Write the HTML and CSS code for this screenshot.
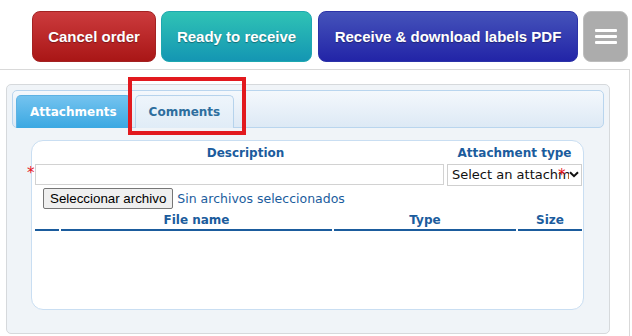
FILE: index.html
```html
<!DOCTYPE html>
<html>
<head>
<meta charset="utf-8">
<link rel="stylesheet" href="styles.css">
</head>
<body>
<div class="toolbar">
  <button class="btn btn-red">Cancel order</button>
  <button class="btn btn-teal">Ready to receive</button>
  <button class="btn btn-blue">Receive &amp; download labels PDF</button>
  <button class="btn btn-gray" aria-label="Menu">
    <span class="bars"><span></span><span></span><span></span></span>
  </button>
</div>
<div class="frame">
  <div class="panel">
    <div class="tabnav">
      <div class="tab active">Attachments</div>
      <div class="tab">Comments</div>
    </div>
    <div class="box">
      <div class="grid-row heads">
        <div class="h-desc">Description</div>
        <div class="h-type">Attachment type</div>
      </div>
      <div class="grid-row inputs">
        <div class="field"><span class="req req-left">*</span><input class="text-in" type="text"></div>
        <div class="field">
          <div class="fake-select"><span class="sel-text">Select an attachment type</span>
            <svg class="chev" width="10" height="7" viewBox="0 0 10 7"><path d="M1 1.2 L5 5.2 L9 1.2" fill="none" stroke="#111" stroke-width="2"/></svg>
          </div>
          <span class="req req-sel">*</span>
        </div>
      </div>
      <div class="file-row">
        <button class="file-btn">Seleccionar archivo</button>
        <span class="file-none">Sin archivos seleccionados</span>
      </div>
      <table class="files">
        <thead>
          <tr><th class="c1"></th><th class="c2">File name</th><th class="c3">Type</th><th class="c4">Size</th></tr>
        </thead>
      </table>
    </div>
  </div>
  <div class="annot"></div>
</div>
</body>
</html>
```

FILE: styles.css
```css
html, body {
  margin: 0;
  padding: 0;
  background: #fff;
  width: 632px;
  height: 336px;
  overflow: hidden;
}
.toolbar {
  display: flex;
  justify-content: flex-end;
  align-items: flex-start;
  gap: 5px;
  padding: 11px 4px 0 0;
  height: 69px;
  box-sizing: border-box;
}
.btn {
  height: 51px;
  border-radius: 8px;
  border: 1px solid transparent;
  color: #fff;
  font-family: "Liberation Sans", Arial, sans-serif;
  font-weight: bold;
  font-size: 15px;
  white-space: nowrap;
  text-shadow: 0 1px 1px rgba(0,0,0,0.35);
  padding: 0;
  cursor: pointer;
  flex: none;
}
.btn-red {
  width: 124px;
  background: linear-gradient(#cc3b3d, #a91616);
  border-color: #a32222;
}
.btn-teal {
  width: 151px;
  background: linear-gradient(#2fc3b5, #1496b3);
  border-color: #1ea8b0;
}
.btn-blue {
  width: 260px;
  margin-left: 1px;
  background: linear-gradient(#4553ba, #2224a7);
  border-color: #2c33a8;
}
.btn-gray {
  width: 45px;
  background: #acacac;
  border-color: #bdbdbd;
  display: flex;
  align-items: center;
  justify-content: center;
}
.bars {
  display: flex;
  flex-direction: column;
  gap: 3.5px;
  width: 22px;
}
.bars span {
  display: block;
  height: 2.5px;
  background: #fff;
  border-radius: 1px;
}
.frame {
  position: relative;
  width: 630px;
  height: 267px;
  box-sizing: border-box;
  border-top: 1px solid #d9d9d9;
  border-right: 1px solid #d9d9d9;
  padding: 14px 0 0 6px;
}
.panel {
  width: 604px;
  height: 250px;
  box-sizing: border-box;
  border: 1px solid #d6d9dc;
  border-radius: 5px;
  background: #f0f4f8;
  padding: 5px;
}
.tabnav {
  height: 38px;
  box-sizing: border-box;
  border: 1px solid #b9d5ee;
  border-radius: 5px;
  background: linear-gradient(#f4f8fc, #dde9f5);
  padding: 4px 0 0 3px;
  display: flex;
  gap: 4px;
  align-items: flex-end;
}
.tab {
  height: 33px;
  margin-bottom: -1px;
  box-sizing: border-box;
  padding: 0 13px 1px;
  border: 1px solid #b6d3ec;
  border-bottom: none;
  border-radius: 5px 5px 0 0;
  background: linear-gradient(#eef5fb, #e0ecf7);
  color: #2e6e9e;
  font-family: "DejaVu Sans", Verdana, sans-serif;
  font-weight: bold;
  font-size: 12px;
  display: flex;
  align-items: center;
}
.tab.active {
  background: linear-gradient(#74c3ef, #3ba8e2);
  border-color: #5db2e3;
  color: #fff;
}
.box {
  margin: 12px 0 0 19px;
  width: 553px;
  height: 170px;
  box-sizing: border-box;
  background: #fff;
  border: 1px solid #c9def2;
  border-radius: 12px;
  padding: 2px 2px 0 2px;
  font-family: "DejaVu Sans", Verdana, sans-serif;
}
.grid-row {
  display: grid;
  grid-template-columns: 409px 135px;
  column-gap: 3px;
  padding-left: 1px;
}
.heads {
  color: #1b5c9d;
  font-weight: bold;
  font-size: 12px;
  height: 20px;
  align-items: center;
}
.h-desc {
  text-align: center;
  padding-left: 12px;
}
.h-type {
  text-align: center;
}
.inputs {
  height: 23px;
  align-items: center;
}
.field {
  position: relative;
  display: flex;
}
.text-in {
  width: 100%;
  height: 21px;
  box-sizing: border-box;
  border: 1px solid #d2d2d2;
  margin: 0;
  padding: 0 4px;
  outline: none;
}
.fake-select {
  width: 135px;
  height: 22px;
  box-sizing: border-box;
  border: 1px solid #cfcfcf;
  display: flex;
  align-items: center;
  padding: 0 2px 0 4px;
  font-size: 13px;
  color: #111;
  overflow: hidden;
}
.sel-text {
  flex: 1;
  white-space: nowrap;
  overflow: hidden;
}
.chev {
  flex: none;
}
.req {
  position: absolute;
  color: #e8141c;
  font-family: "DejaVu Sans", sans-serif;
  font-size: 15px;
  line-height: 1;
}
.req-left {
  left: -8px;
  top: 2px;
}
.req-sel {
  left: 111px;
  top: 4px;
}
.file-row {
  display: flex;
  align-items: center;
  gap: 4px;
  padding: 1px 0 0 9px;
  height: 22px;
}
.file-btn {
  height: 21px;
  box-sizing: border-box;
  font-family: "Liberation Sans", Arial, sans-serif;
  font-size: 13.33px;
  padding: 0 6px;
  background: #efefef;
  border: 1px solid #767676;
  border-radius: 2px;
  color: #000;
}
.file-none {
  color: #1b5c9d;
  font-size: 12.5px;
}
.files {
  width: 551px;
  border-spacing: 2px;
  margin-top: 0;
  margin-left: -1px;
}
.files th {
  color: #1b5c9d;
  font-weight: bold;
  font-size: 12px;
  height: 17px;
  padding: 0 0 1px 0;
  border-bottom: 2px solid #1b5c9d;
  text-align: center;
}
.files .c1 { width: 24px; }
.files .c3 { width: 182px; }
.files .c4 { width: 64px; }
.annot {
  position: absolute;
  left: 128px;
  top: 7px;
  width: 118px;
  height: 58px;
  box-sizing: border-box;
  border: 4px solid #e2191e;
}
```
